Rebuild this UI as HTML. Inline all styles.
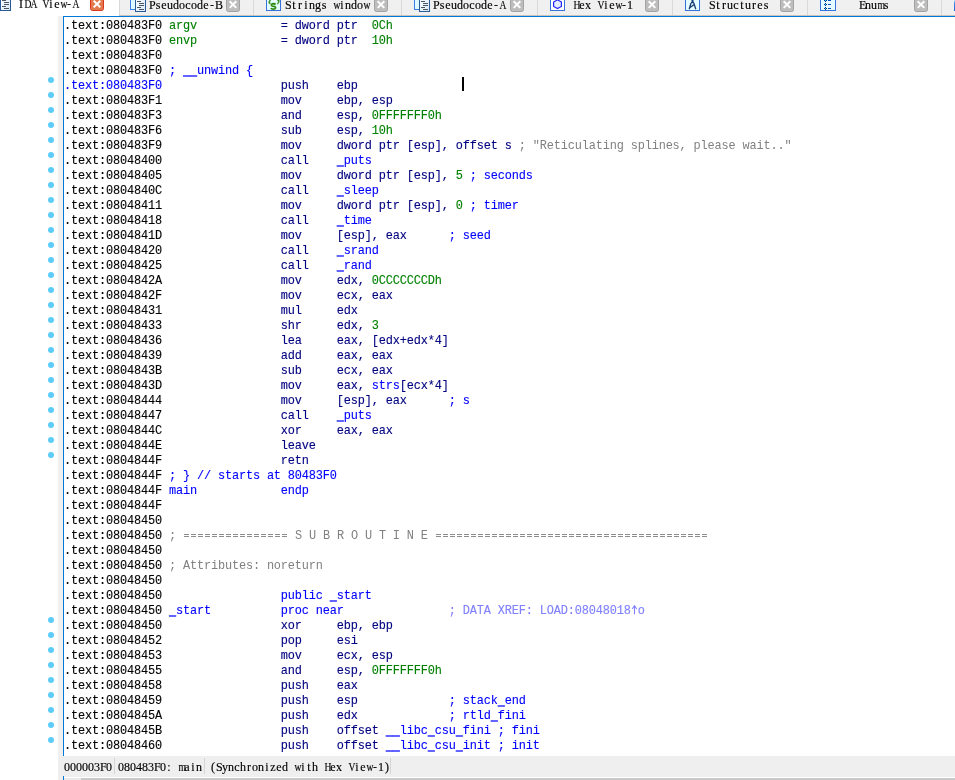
<!DOCTYPE html>
<html><head><meta charset="utf-8">
<style>
html,body{margin:0;padding:0;}
body{width:955px;height:780px;overflow:hidden;background:#fff;position:relative;font-family:"Liberation Mono",monospace;}
.abs{position:absolute;}
#tabbar{will-change:transform;position:absolute;left:0;top:0;width:955px;height:16px;background:#f0f0f0;}
#tabbar .tb{position:absolute;left:0;top:15px;width:955px;height:1px;background:#e6d9cc;}
.tab{position:absolute;top:0;height:15px;}
.sep{position:absolute;top:0;width:1px;height:15px;background:#dadada;}
.tt{position:absolute;top:-2px;-webkit-text-stroke:0.1px #000;font-size:11px;line-height:14px;color:#000;white-space:pre;transform-origin:0 0;transform:scaleX(0.90909);}
.cx{position:absolute;top:-3px;width:12px;height:13px;border:1px solid #a0a0a0;border-radius:3px;background:#bdbdbd;}
.cx.red{border-color:#d9472b;background:#e8784c;}
.cx:before,.cx:after{content:"";position:absolute;left:5px;top:2px;width:2px;height:9px;background:#fff;}
.cx:before{transform:rotate(45deg);} .cx:after{transform:rotate(-45deg);}
#active{position:absolute;left:0;top:0;width:119px;height:16px;background:#fff;}
#gut{position:absolute;left:58px;top:16px;width:5px;height:740px;background:#f0f0f0;}
#box{position:absolute;left:63px;top:16px;width:900px;height:740px;border-left:1px solid #0078d7;border-top:1px solid #0078d7;box-sizing:border-box;background:#fff;}
#code{position:absolute;left:64px;top:19px;will-change:transform;-webkit-text-stroke:0.12px;font-size:11.9px;letter-spacing:-0.14px;line-height:15px;white-space:pre;}
.l{height:15px;}
.u{position:relative;top:0px;text-shadow:0 1px 0 currentColor;}
.k{color:#000}.n{color:#000080}.g{color:#008000}.b{color:#0000ff}.y{color:#808080;-webkit-text-stroke:0}.eq{display:inline-block;width:7px;height:15px;vertical-align:top;background-image:linear-gradient(#8c8c8c,#8c8c8c),linear-gradient(#8c8c8c,#8c8c8c);background-size:5px 1px,5px 1px;background-position:1px 5px,1px 7px;background-repeat:no-repeat;}.p{color:#8080ff}
.d{position:absolute;left:48px;width:6px;height:6px;border-radius:3px;background:#5ccdf8;}
#caret{position:absolute;left:462px;top:77px;width:2px;height:14px;background:#000;}
#status{will-change:transform;position:absolute;left:58px;top:756px;width:897px;height:21px;background:#efefef;}
.st{position:absolute;top:4px;-webkit-text-stroke:0.1px #000;font-size:11px;line-height:14px;color:#000;white-space:pre;transform-origin:0 0;transform:scaleX(0.90909);}
.ss{position:absolute;top:2px;width:1px;height:16px;background:#d5d5d5;}
.c{display:inline-block;width:6px;text-align:center;font-style:normal;}.c.w{transform:scaleX(0.8);}
.tt,.st{font-family:"Liberation Serif",serif !important;font-size:12px !important;transform:none !important;-webkit-text-stroke:0.15px #000 !important;}
</style></head><body>
<div id="tabbar"><svg width="955" height="16" style="position:absolute;left:0;top:0"><defs><linearGradient id="gp" x1="0" y1="0" x2="1" y2="1"><stop offset="0" stop-color="#ffffff"/><stop offset="1" stop-color="#d6e8fb"/></linearGradient></defs><rect x="0" y="0" width="955" height="15" fill="#f0f0f0"/><rect x="0" y="15" width="955" height="1" fill="#cbc2b9"/><rect x="0" y="0" width="119" height="16" fill="#fff"/><rect x="119" y="0" width="1" height="15" fill="#d9d9d9"/><rect x="253" y="0" width="1" height="15" fill="#d9d9d9"/><rect x="401" y="0" width="1" height="15" fill="#d9d9d9"/><rect x="537" y="0" width="1" height="15" fill="#d9d9d9"/><rect x="672" y="0" width="1" height="15" fill="#d9d9d9"/><rect x="807" y="0" width="1" height="15" fill="#d9d9d9"/><rect x="941" y="0" width="1" height="15" fill="#d9d9d9"/><rect x="0.5" y="-3.5" width="10" height="14" fill="url(#gp)" stroke="#2b5a98"/><rect x="2" y="0" width="4" height="1" fill="#4d5560"/><rect x="4" y="2" width="5" height="1" fill="#4d5560"/><rect x="4" y="4" width="5" height="1" fill="#4d5560"/><rect x="2" y="6" width="4" height="1" fill="#4d5560"/><rect x="4" y="8" width="5" height="1" fill="#4d5560"/><rect x="90.5" y="-3.5" width="13" height="14.0" rx="2" fill="#e27a4e" stroke="#d8361f"/><path d="M93.7 0.8 L100.3 7.4 M100.3 0.8 L93.7 7.4" stroke="#fff" stroke-width="2"/><rect x="130.5" y="-3.5" width="6" height="13" fill="#def9ff" stroke="#3a7fe6"/><rect x="135.5" y="-3.5" width="10" height="15" fill="url(#gp)" stroke="#2b5a98"/><rect x="137" y="1" width="4" height="1" fill="#4d5560"/><rect x="139" y="3" width="5" height="1" fill="#4d5560"/><rect x="139" y="5" width="5" height="1" fill="#4d5560"/><rect x="137" y="7" width="4" height="1" fill="#4d5560"/><rect x="139" y="9" width="5" height="1" fill="#4d5560"/><rect x="226.5" y="-3.5" width="13" height="15.0" rx="2" fill="#bdbdbd" stroke="#a3a3a3"/><path d="M229.7 1.3 L236.3 7.9 M236.3 1.3 L229.7 7.9" stroke="#fff" stroke-width="2"/><rect x="266.5" y="-3.5" width="14" height="14" fill="#e4fbff" stroke="#3572dc"/><path d="M270.3 -0.5 Q268.6 1.2 268.8 3 Q269.2 4 270.2 3.6 Q270.6 2.6 269.6 2.2 Q269.7 1 270.6 0.2 Z" fill="#2e8a10" stroke="#2e8a10" stroke-width="0.6"/><path d="M277.6 4.2 Q279.6 2.6 279.2 0.6 Q278.8 -0.4 277.8 0 Q277.4 1 278.4 1.4 Q278.4 2.6 277.4 3.6 Z" fill="#2e8a10" stroke="#2e8a10" stroke-width="0.6"/><path d="M275.6 4.4 Q275 3.6 273.4 3.6 Q271.2 3.8 271.4 5.2 Q271.8 6.2 273.6 6.4 Q275.8 6.8 275.6 8 Q275.2 9.2 273.2 9.2 Q271.4 9.1 270.9 8.2" stroke="#2a8a0a" stroke-width="1.7" fill="none"/><rect x="374.5" y="-3.5" width="13" height="15.0" rx="2" fill="#bdbdbd" stroke="#a3a3a3"/><path d="M377.7 1.3 L384.3 7.9 M384.3 1.3 L377.7 7.9" stroke="#fff" stroke-width="2"/><rect x="414.5" y="-3.5" width="6" height="13" fill="#def9ff" stroke="#3a7fe6"/><rect x="419.5" y="-3.5" width="10" height="15" fill="url(#gp)" stroke="#2b5a98"/><rect x="421" y="1" width="4" height="1" fill="#4d5560"/><rect x="423" y="3" width="5" height="1" fill="#4d5560"/><rect x="423" y="5" width="5" height="1" fill="#4d5560"/><rect x="421" y="7" width="4" height="1" fill="#4d5560"/><rect x="423" y="9" width="5" height="1" fill="#4d5560"/><rect x="510.5" y="-3.5" width="13" height="15.0" rx="2" fill="#bdbdbd" stroke="#a3a3a3"/><path d="M513.7 1.3 L520.3 7.9 M520.3 1.3 L513.7 7.9" stroke="#fff" stroke-width="2"/><rect x="550.5" y="-3.5" width="14" height="14" fill="#ffffff" stroke="#3572dc"/><path d="M557.5 -0.2 L561.4 2.1 L561.4 6.4 L557.5 8.6 L553.6 6.4 L553.6 2.1 Z" fill="#e2ecff" stroke="#2424ff" stroke-width="1.2"/><rect x="645.5" y="-3.5" width="13" height="15.0" rx="2" fill="#bdbdbd" stroke="#a3a3a3"/><path d="M648.7 1.3 L655.3 7.9 M655.3 1.3 L648.7 7.9" stroke="#fff" stroke-width="2"/><rect x="685.5" y="-3.5" width="14" height="14" fill="#e4fbff" stroke="#3572dc"/><path d="M691.5 -1 L691.5 2.5 L693.5 2.5 L693.5 -1 Z" fill="#163a72"/><path d="M691 3 L689.2 9.2 M693.8 3 L695.8 9.2 M690 7.5 L694.6 4.2" stroke="#163a72" stroke-width="1.3" fill="none"/><rect x="691" y="2" width="3" height="1.2" fill="#163a72"/><rect x="780.5" y="-3.5" width="13" height="15.0" rx="2" fill="#bdbdbd" stroke="#a3a3a3"/><path d="M783.7 1.3 L790.3 7.9 M790.3 1.3 L783.7 7.9" stroke="#fff" stroke-width="2"/><rect x="820.5" y="-3.5" width="15" height="14" fill="#e4fbff" stroke="#3572dc"/><rect x="825" y="-1" width="1" height="3" fill="#0b2a8a"/><rect x="824" y="0" width="3" height="1" fill="#0b2a8a"/><rect x="825" y="0" width="1" height="1" fill="#22eaff"/><rect x="828" y="0" width="3" height="1" fill="#0a4fc8"/><rect x="825" y="3" width="1" height="3" fill="#0b2a8a"/><rect x="824" y="4" width="3" height="1" fill="#0b2a8a"/><rect x="825" y="4" width="1" height="1" fill="#22eaff"/><rect x="828" y="4" width="3" height="1" fill="#0a4fc8"/><rect x="825" y="7" width="1" height="3" fill="#0b2a8a"/><rect x="824" y="8" width="3" height="1" fill="#0b2a8a"/><rect x="825" y="8" width="1" height="1" fill="#22eaff"/><rect x="828" y="8" width="3" height="1" fill="#0a4fc8"/><rect x="914.5" y="-3.5" width="13" height="15.0" rx="2" fill="#bdbdbd" stroke="#a3a3a3"/><path d="M917.7 1.3 L924.3 7.9 M924.3 1.3 L917.7 7.9" stroke="#fff" stroke-width="2"/><linearGradient id="gs" x1="0" y1="0" x2="0" y2="1"><stop offset="0" stop-color="#d0ecff"/><stop offset="0.3" stop-color="#3a8ae6"/><stop offset="1" stop-color="#1d62d0"/></linearGradient><rect x="954" y="0" width="1" height="11" fill="url(#gs)"/></svg><div class="tt" style="left:18px;top:-3px"><i class="c">I</i><i class="c w">D</i><i class="c w">A</i><i class="c">&nbsp;</i><i class="c w">V</i><i class="c">i</i><i class="c">e</i><i class="c w">w</i><i class="c">-</i><i class="c w">A</i></div><div class="tt" style="left:149px;top:-2px"><i class="c">P</i><i class="c">s</i><i class="c">e</i><i class="c">u</i><i class="c">d</i><i class="c">o</i><i class="c">c</i><i class="c">o</i><i class="c">d</i><i class="c">e</i><i class="c">-</i><i class="c">B</i></div><div class="tt" style="left:285px;top:-2px"><i class="c">S</i><i class="c">t</i><i class="c">r</i><i class="c">i</i><i class="c">n</i><i class="c">g</i><i class="c">s</i><i class="c">&nbsp;</i><i class="c w">w</i><i class="c">i</i><i class="c">n</i><i class="c">d</i><i class="c">o</i><i class="c w">w</i></div><div class="tt" style="left:433px;top:-2px"><i class="c">P</i><i class="c">s</i><i class="c">e</i><i class="c">u</i><i class="c">d</i><i class="c">o</i><i class="c">c</i><i class="c">o</i><i class="c">d</i><i class="c">e</i><i class="c">-</i><i class="c w">A</i></div><div class="tt" style="left:573px;top:-2px"><i class="c w">H</i><i class="c">e</i><i class="c">x</i><i class="c">&nbsp;</i><i class="c w">V</i><i class="c">i</i><i class="c">e</i><i class="c w">w</i><i class="c">-</i><i class="c">1</i></div><div class="tt" style="left:709px;top:-2px"><i class="c">S</i><i class="c">t</i><i class="c">r</i><i class="c">u</i><i class="c">c</i><i class="c">t</i><i class="c">u</i><i class="c">r</i><i class="c">e</i><i class="c">s</i></div><div class="tt" style="left:859px;top:-2px"><i class="c">E</i><i class="c">n</i><i class="c">u</i><i class="c w">m</i><i class="c">s</i></div></div>
<div id="gut"></div>
<div id="box"></div>
<div class="d" style="top:77px"></div><div class="d" style="top:92px"></div><div class="d" style="top:107px"></div><div class="d" style="top:122px"></div><div class="d" style="top:137px"></div><div class="d" style="top:152px"></div><div class="d" style="top:167px"></div><div class="d" style="top:182px"></div><div class="d" style="top:197px"></div><div class="d" style="top:212px"></div><div class="d" style="top:227px"></div><div class="d" style="top:242px"></div><div class="d" style="top:257px"></div><div class="d" style="top:272px"></div><div class="d" style="top:287px"></div><div class="d" style="top:302px"></div><div class="d" style="top:317px"></div><div class="d" style="top:332px"></div><div class="d" style="top:347px"></div><div class="d" style="top:362px"></div><div class="d" style="top:377px"></div><div class="d" style="top:392px"></div><div class="d" style="top:407px"></div><div class="d" style="top:422px"></div><div class="d" style="top:437px"></div><div class="d" style="top:452px"></div><div class="d" style="top:617px"></div><div class="d" style="top:632px"></div><div class="d" style="top:647px"></div><div class="d" style="top:662px"></div><div class="d" style="top:677px"></div><div class="d" style="top:692px"></div><div class="d" style="top:707px"></div><div class="d" style="top:722px"></div><div class="d" style="top:737px"></div>
<div id="code"><div class="l"><span class="k">.text:080483F0 </span><span class="g">argv</span><span class="n">            = dword ptr  </span><span class="g">0Ch</span></div><div class="l"><span class="k">.text:080483F0 </span><span class="g">envp</span><span class="n">            = dword ptr  </span><span class="g">10h</span></div><div class="l"><span class="k">.text:080483F0 </span></div><div class="l"><span class="k">.text:080483F0 </span><span class="b">; <span class="u">_</span><span class="u">_</span>unwind {</span></div><div class="l"><span class="b">.text:080483F0 </span><span class="n">                push    ebp</span></div><div class="l"><span class="k">.text:080483F1 </span><span class="n">                mov     </span><span class="n">ebp, esp</span></div><div class="l"><span class="k">.text:080483F3 </span><span class="n">                and     </span><span class="n">esp, </span><span class="g">0FFFFFFF0h</span></div><div class="l"><span class="k">.text:080483F6 </span><span class="n">                sub     </span><span class="n">esp, </span><span class="g">10h</span></div><div class="l"><span class="k">.text:080483F9 </span><span class="n">                mov     dword ptr [esp], offset s </span><span class="y">; &quot;Reticulating splines, please wait..&quot;</span></div><div class="l"><span class="k">.text:08048400 </span><span class="n">                call    </span><span class="b"><span class="u">_</span>puts</span></div><div class="l"><span class="k">.text:08048405 </span><span class="n">                mov     dword ptr [esp], </span><span class="g">5</span><span class="n"> </span><span class="b">; seconds</span></div><div class="l"><span class="k">.text:0804840C </span><span class="n">                call    </span><span class="b"><span class="u">_</span>sleep</span></div><div class="l"><span class="k">.text:08048411 </span><span class="n">                mov     dword ptr [esp], </span><span class="g">0</span><span class="n"> </span><span class="b">; timer</span></div><div class="l"><span class="k">.text:08048418 </span><span class="n">                call    </span><span class="b"><span class="u">_</span>time</span></div><div class="l"><span class="k">.text:0804841D </span><span class="n">                mov     </span><span class="n">[esp], eax</span><span class="n">      </span><span class="b">; seed</span></div><div class="l"><span class="k">.text:08048420 </span><span class="n">                call    </span><span class="b"><span class="u">_</span>srand</span></div><div class="l"><span class="k">.text:08048425 </span><span class="n">                call    </span><span class="b"><span class="u">_</span>rand</span></div><div class="l"><span class="k">.text:0804842A </span><span class="n">                mov     </span><span class="n">edx, </span><span class="g">0CCCCCCCDh</span></div><div class="l"><span class="k">.text:0804842F </span><span class="n">                mov     </span><span class="n">ecx, eax</span></div><div class="l"><span class="k">.text:08048431 </span><span class="n">                mul     </span><span class="n">edx</span></div><div class="l"><span class="k">.text:08048433 </span><span class="n">                shr     </span><span class="n">edx, </span><span class="g">3</span></div><div class="l"><span class="k">.text:08048436 </span><span class="n">                lea     </span><span class="n">eax, [edx+edx*4]</span></div><div class="l"><span class="k">.text:08048439 </span><span class="n">                add     </span><span class="n">eax, eax</span></div><div class="l"><span class="k">.text:0804843B </span><span class="n">                sub     </span><span class="n">ecx, eax</span></div><div class="l"><span class="k">.text:0804843D </span><span class="n">                mov     </span><span class="n">eax, </span><span class="b">strs</span><span class="n">[ecx*4]</span></div><div class="l"><span class="k">.text:08048444 </span><span class="n">                mov     </span><span class="n">[esp], eax</span><span class="n">      </span><span class="b">; s</span></div><div class="l"><span class="k">.text:08048447 </span><span class="n">                call    </span><span class="b"><span class="u">_</span>puts</span></div><div class="l"><span class="k">.text:0804844C </span><span class="n">                xor     </span><span class="n">eax, eax</span></div><div class="l"><span class="k">.text:0804844E </span><span class="n">                leave   </span></div><div class="l"><span class="k">.text:0804844F </span><span class="n">                retn    </span></div><div class="l"><span class="k">.text:0804844F </span><span class="b">; } // starts at 80483F0</span></div><div class="l"><span class="k">.text:0804844F </span><span class="b">main            endp</span></div><div class="l"><span class="k">.text:0804844F </span></div><div class="l"><span class="k">.text:08048450 </span></div><div class="l"><span class="k">.text:08048450 </span><span class="y">; <i class="eq"></i><i class="eq"></i><i class="eq"></i><i class="eq"></i><i class="eq"></i><i class="eq"></i><i class="eq"></i><i class="eq"></i><i class="eq"></i><i class="eq"></i><i class="eq"></i><i class="eq"></i><i class="eq"></i><i class="eq"></i><i class="eq"></i> S U B R O U T I N E <i class="eq"></i><i class="eq"></i><i class="eq"></i><i class="eq"></i><i class="eq"></i><i class="eq"></i><i class="eq"></i><i class="eq"></i><i class="eq"></i><i class="eq"></i><i class="eq"></i><i class="eq"></i><i class="eq"></i><i class="eq"></i><i class="eq"></i><i class="eq"></i><i class="eq"></i><i class="eq"></i><i class="eq"></i><i class="eq"></i><i class="eq"></i><i class="eq"></i><i class="eq"></i><i class="eq"></i><i class="eq"></i><i class="eq"></i><i class="eq"></i><i class="eq"></i><i class="eq"></i><i class="eq"></i><i class="eq"></i><i class="eq"></i><i class="eq"></i><i class="eq"></i><i class="eq"></i><i class="eq"></i><i class="eq"></i><i class="eq"></i><i class="eq"></i></span></div><div class="l"><span class="k">.text:08048450 </span></div><div class="l"><span class="k">.text:08048450 </span><span class="y">; Attributes: noreturn</span></div><div class="l"><span class="k">.text:08048450 </span></div><div class="l"><span class="k">.text:08048450 </span><span class="b">                public <span class="u">_</span>start</span></div><div class="l"><span class="k">.text:08048450 </span><span class="b"><span class="u">_</span>start          proc near</span><span class="n">               </span><span class="p">; DATA XREF: LOAD:08048018</span><svg width="7" height="15" style="vertical-align:top"><path d="M3.5 2 V10.3 M1.2 5 L3.5 1.8 L5.8 5" stroke="#8080ff" stroke-width="1.1" fill="none"/></svg><span class="p">o</span></div><div class="l"><span class="k">.text:08048450 </span><span class="n">                xor     </span><span class="n">ebp, ebp</span></div><div class="l"><span class="k">.text:08048452 </span><span class="n">                pop     </span><span class="n">esi</span></div><div class="l"><span class="k">.text:08048453 </span><span class="n">                mov     </span><span class="n">ecx, esp</span></div><div class="l"><span class="k">.text:08048455 </span><span class="n">                and     </span><span class="n">esp, </span><span class="g">0FFFFFFF0h</span></div><div class="l"><span class="k">.text:08048458 </span><span class="n">                push    </span><span class="n">eax</span></div><div class="l"><span class="k">.text:08048459 </span><span class="n">                push    </span><span class="n">esp</span><span class="n">             </span><span class="b">; stack<span class="u">_</span>end</span></div><div class="l"><span class="k">.text:0804845A </span><span class="n">                push    </span><span class="n">edx</span><span class="n">             </span><span class="b">; rtld<span class="u">_</span>fini</span></div><div class="l"><span class="k">.text:0804845B </span><span class="n">                push    offset </span><span class="b"><span class="u">_</span><span class="u">_</span>libc<span class="u">_</span>csu<span class="u">_</span>fini</span><span class="n"> </span><span class="b">; fini</span></div><div class="l"><span class="k">.text:08048460 </span><span class="n">                push    offset </span><span class="b"><span class="u">_</span><span class="u">_</span>libc<span class="u">_</span>csu<span class="u">_</span>init</span><span class="n"> </span><span class="b">; init</span></div></div>
<div id="caret"></div>
<div id="status">
 <div class="st" style="left:6px"><i class="c">0</i><i class="c">0</i><i class="c">0</i><i class="c">0</i><i class="c">0</i><i class="c">3</i><i class="c">F</i><i class="c">0</i></div>
 <div class="ss" style="left:56px"></div>
 <div class="st" style="left:60px"><i class="c">0</i><i class="c">8</i><i class="c">0</i><i class="c">4</i><i class="c">8</i><i class="c">3</i><i class="c">F</i><i class="c">0</i><i class="c">:</i><i class="c">&nbsp;</i><i class="c w">m</i><i class="c">a</i><i class="c">i</i><i class="c">n</i></div>
 <div class="ss" style="left:146px"></div>
 <div class="st" style="left:152px"><i class="c">(</i><i class="c">S</i><i class="c">y</i><i class="c">n</i><i class="c">c</i><i class="c">h</i><i class="c">r</i><i class="c">o</i><i class="c">n</i><i class="c">i</i><i class="c">z</i><i class="c">e</i><i class="c">d</i><i class="c">&nbsp;</i><i class="c w">w</i><i class="c">i</i><i class="c">t</i><i class="c">h</i><i class="c">&nbsp;</i><i class="c w">H</i><i class="c">e</i><i class="c">x</i><i class="c">&nbsp;</i><i class="c w">V</i><i class="c">i</i><i class="c">e</i><i class="c w">w</i><i class="c">-</i><i class="c">1</i><i class="c">)</i></div>
 <div class="ss" style="left:332px"></div>
</div>
<div class="abs" style="left:58px;top:776px;width:5px;height:4px;background:#efefef"></div><div class="abs" style="left:63px;top:776px;width:1px;height:4px;background:#0078d7"></div>
<div class="abs" style="left:64px;top:778px;width:17px;height:2px;background:#e9e9e9"></div>
<div class="abs" style="left:81px;top:778px;width:874px;height:2px;background:#c9c9c9"></div>
</body></html>
